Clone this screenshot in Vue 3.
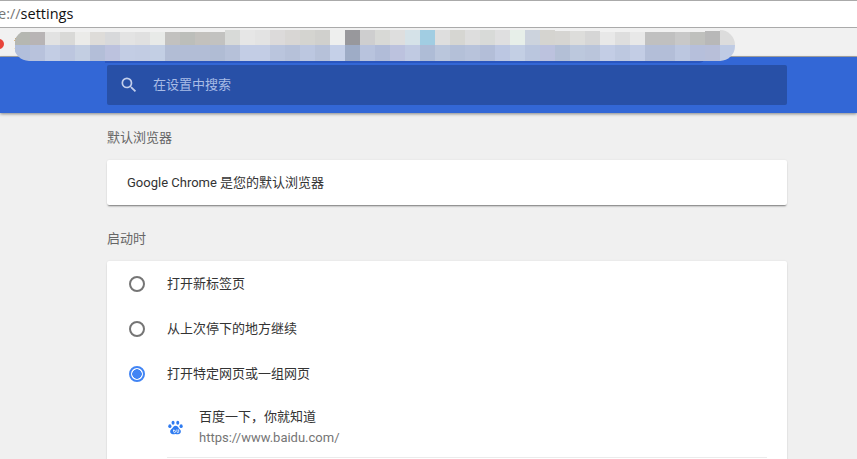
<script setup>
const top = [
  ['#b5b7b1',13],['#b8b4b5',13],['#e2e2e2',13],['#d9d9d7',13],['#ebebe9',13],['#dedcd9',13],['#d8d9db',13],['#e3e3e3',13],['#e0e0e0',13],['#e8eae8',13],
  ['#c2c1bf',13],['#bcbeba',13],['#c3c1bd',13],['#c2c2c0',13],['#d8dad8',15],['#e6e6e6',15],['#e3e3e3',15],['#dcdada',15],['#d8d6d4',15],['#d4d4d0',15],
  ['#d0d0cd',15],['#eeefee',15],['#98989c',15],['#cececf',15],['#d8d9d6',15],['#dedede',15],['#d5e2e8',15],['#a1cde2',15],['#dedede',15],['#d6d6d2',15],
  ['#dddddd',15],['#d8dad8',15],['#dfdfe0',15],['#e7efe9',15],['#ccd3dd',15],['#d5d4d0',15],['#d6d5d2',14],['#dddddb',14],['#d6d6d6',14],['#e8e8e8',13],
  ['#dedede',13],['#e8e8e8',13],['#c0c0c0',13],['#c0c0c0',13],['#c8c8c8',13],['#bfc0bd',13],['#b8b8b8',14],['#dcdcdc',15]
]
const bottom = [
  '#b2bfdb','#b8c2dc','#c3cde4','#bcc6df','#c3cee2','#b3bed8','#bcc2de','#c3cde4','#c2cce3','#c3cfe4',
  '#b2bdd5','#b2bdd6','#b2bdd6','#b0bcd4','#b6c1d9','#c3cde5','#c3cde5','#bac5dd','#b6c1d9','#bcc7e0',
  '#b6c1d9','#c5d0e8','#9eacc6','#b8c3dd','#b1bcd8','#bcc2de','#c0cae2','#aebcd6','#bac6dc','#b4c0d8',
  '#b8c3db','#b3bed8','#bcc7e2','#c3cfe4','#bac6de','#bcc2de','#b3bfd6','#bcc8dd','#bac5db','#c3cde5',
  '#bdc8e0','#c3cde5','#b3bed8','#b3bed8','#bcc7e0','#b6bfdb','#b8bfd9','#bfcbe4'
]
const tiles = top.map((t, i) => ({ color: t[0], height: t[1], lower: bottom[i] }))
const options = ['打开新标签页', '从上次停下的地方继续', '打开特定网页或一组网页']
</script>

<template>
  <div class="page">
    <div class="address">
      <span class="scheme">e://</span><span class="path">settings</span>
    </div>
    <div class="bookmarks">
      <span class="favicon"></span>
      <span class="mark">黄</span>
      <div class="band"></div>
      <div class="blur">
        <div class="blur-row upper">
          <i v-for="(t, i) in tiles" :key="i" :style="{ background: t.color, height: t.height + 'px' }"></i>
        </div>
        <div class="blur-row">
          <i v-for="(t, i) in tiles" :key="i" :style="{ background: t.lower }"></i>
        </div>
      </div>
    </div>
    <header class="toolbar">
      <div class="search">
        <svg class="search-icon" viewBox="0 0 24 24" width="20" height="20">
          <path fill="#c3cfec" d="M15.5 14h-.79l-.28-.27A6.47 6.47 0 0 0 16 9.5 6.5 6.500 0 1 0 9.500 16c1.610 0 3.090-.59 4.230-1.570l.27.28v.79l5 4.990L20.490 19l-4.990-5zm-6 0C7.010 14 5 11.990 5 9.500S7.010 5 9.500 5 14 7.010 14 9.500 11.990 14 9.500 14z"/>
        </svg>
        <span class="placeholder">在设置中搜索</span>
      </div>
    </header>
    <main class="content">
      <h2 class="label first">默认浏览器</h2>
      <section class="card default-browser">Google Chrome 是您的默认浏览器</section>
      <h2 class="label second">启动时</h2>
      <section class="card startup">
        <div v-for="(o, i) in options" :key="o" class="option">
          <span class="radio" :class="{ on: i === 2 }"></span>
          <span class="option-text">{{ o }}</span>
        </div>
        <div class="site">
          <svg class="paw" viewBox="0 0 16 16" width="15" height="15">
            <g fill="#2f7bf0">
              <ellipse cx="5.400" cy="3" rx="1.600" ry="2.100"/>
              <ellipse cx="10.400" cy="3" rx="1.600" ry="2.100"/>
              <ellipse cx="2" cy="6.600" rx="1.700" ry="2"/>
              <ellipse cx="14" cy="6.600" rx="1.700" ry="2"/>
              <path d="M8 6.200c-1.700 0-2.300 1.400-3.200 2.400-.9.900-2.500 1.900-2.500 3.700 0 1.900 1.500 2.900 3 2.900 1 0 1.800-.4 2.700-.4s1.700.4 2.700.4c1.500 0 3-1 3-2.900 0-1.800-1.600-2.800-2.500-3.700C11.300 7.600 9.700 6.200 8 6.200z"/>
            </g>
            <path fill="none" stroke="#fff" stroke-width=".9" d="M6 10.300v2c0 .8.500 1.200 1.100 1.200.5 0 .9-.4.900-1.200s-.4-1.200-.9-1.200H5.700M9.500 10v2.300c0 .8.400 1.200 1 1.200.5 0 .9-.4.900-1.200V10"/>
          </svg>
          <div class="site-text">
            <div class="site-title">百度一下，你就知道</div>
            <div class="site-url">https://www.baidu.com/</div>
          </div>
        </div>
      </section>
    </main>
  </div>
</template>

<style scoped>
.page {
  height: 459px;
  overflow: hidden;
  background: #f0f0f0;
  font-family: Roboto, "Noto Sans CJK SC", sans-serif;
  font-size: 13px;
  color: #333;
}
.address {
  height: 25px;
  padding-bottom: 1px;
  display: flex;
  align-items: center;
  background: #fff;
  border-top: 1px solid #aaa;
  border-bottom: 1px solid #aaa;
  font-family: "Open Sans", sans-serif;
  font-size: 14.5px;
}
.scheme {
  margin-left: -2px;
  color: #777;
}
.path {
  color: #111;
}
.bookmarks {
  position: relative;
  height: 28px;
  background: #f1f1f1;
  border-bottom: 1px solid #a9a9a9;
  display: flex;
  align-items: center;
}
.favicon {
  width: 10px;
  height: 10px;
  margin-left: -6px;
  margin-top: 4px;
  border-radius: 50%;
  background: #e8443a;
}
.mark {
  margin-left: 10px;
  font-size: 12px;
  color: #222;
}
.band {
  position: absolute;
  z-index: 2;
  left: 105px;
  top: 29px;
  width: 600px;
  height: 6px;
  border-radius: 0 0 12px 0;
  background: #2a56bf;
}
.blur {
  position: absolute;
  z-index: 3;
  left: 14px;
  top: 2px;
  width: 721px;
  height: 31px;
  border-radius: 15px;
  overflow: hidden;
}
.blur-row {
  display: flex;
  height: 15px;
  padding-left: 1px;
}
.blur-row.upper {
  align-items: flex-end;
}
.blur-row + .blur-row {
  height: 16px;
}
.blur-row i {
  flex: 0 0 15px;
  display: block;
}
.toolbar {
  position: relative;
  z-index: 1;
  height: 40px;
  padding: 8px 0 8px 107px;
  background: #3367d6;
  box-shadow: 0 1px 3px rgba(0, 0, 0, 0.45);
}
.search {
  width: 680px;
  height: 40px;
  display: flex;
  align-items: center;
  border-radius: 2px;
  background: #2850a7;
}
.search-icon {
  margin-left: 12px;
}
.placeholder {
  margin-left: 14px;
  padding-bottom: 3px;
  color: #a9bce6;
}
.content {
  width: 680px;
  margin-left: 107px;
}
.label {
  margin: 0;
  display: flex;
  align-items: center;
  font-size: 13px;
  font-weight: 400;
  color: #666;
}
.label.first {
  height: 47px;
}
.label.second {
  height: 39px;
  padding: 13px 0 4px;
}
.card {
  border-radius: 2px;
  background: #fff;
  box-shadow: 0 2px 2px -1px rgba(0, 0, 0, 0.5), 0 0 2px rgba(0, 0, 0, 0.08);
}
.default-browser {
  height: 43px;
  display: flex;
  align-items: center;
  padding: 0 0 2px 20px;
}
.startup {
  padding-bottom: 20px;
}
.option {
  height: 45px;
  display: flex;
  align-items: center;
  padding-left: 22px;
  gap: 22px;
}
.option-text {
  padding-bottom: 2px;
}
.radio {
  box-sizing: border-box;
  width: 16px;
  height: 16px;
  border: 2px solid #757575;
  border-radius: 50%;
}
.radio.on {
  border-color: #4285f4;
  background: radial-gradient(circle, #4285f4 0 4.500px, #fff 5px);
}
.site {
  display: flex;
  align-items: center;
  height: 59px;
  padding-top: 2px;
  margin: 0 20px 0 60px;
  border-bottom: 1px solid #ebebeb;
}
.paw {
  flex: none;
  margin-left: 1px;
  margin-right: 16px;
}
.site-title {
  line-height: 20px;
}
.site-url {
  line-height: 20px;
  margin-top: 1px;
  color: #757575;
}
</style>

<style>
html, body {
  margin: 0;
  overflow: hidden;
}
</style>
